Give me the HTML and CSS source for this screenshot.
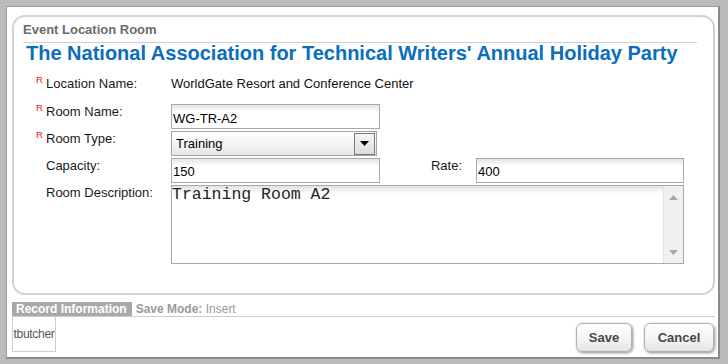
FILE: index.html
```html
<!DOCTYPE html>
<html>
<head>
<meta charset="utf-8">
<link rel="stylesheet" href="styles.css">
</head>
<body>
<div class="frame">
  <div class="window">
    <div class="panel">
      <div class="panel-title">Event Location Room</div>
      <h1 class="event-name">The National Association for Technical Writers' Annual Holiday Party</h1>
      <div class="form">
        <div class="row row-static">
          <span class="req">R</span><span class="label">Location Name:</span><span class="value">WorldGate Resort and Conference Center</span>
        </div>
        <div class="row">
          <span class="req">R</span><span class="label">Room Name:</span><div class="input w-short text-low">WG-TR-A2</div>
        </div>
        <div class="row">
          <span class="req">R</span><span class="label">Room Type:</span>
          <div class="select"><span class="select-text">Training</span><span class="select-btn"><svg width="9" height="5" viewBox="0 0 9 5"><path d="M0 0H9L4.5 5Z" fill="#000"/></svg></span></div>
        </div>
        <div class="row row-cap">
          <span class="req"></span><span class="label">Capacity:</span><div class="input w-short">150</div>
          <span class="label rate-label">Rate:</span><div class="input w-rate">400</div>
        </div>
        <div class="row">
          <span class="req"></span><span class="label">Room Description:</span>
          <div class="textarea"><div class="ta-text">Training Room A2</div><div class="scrollbar"><svg width="9" height="5" viewBox="0 0 9 5"><path d="M0 5H9L4.5 0Z" fill="#a8a8a8"/></svg><svg width="9" height="5" viewBox="0 0 9 5"><path d="M0 0H9L4.5 5Z" fill="#a8a8a8"/></svg></div></div>
        </div>
      </div>
    </div>
    <div class="record-head">
      <span class="record-tab">Record Information</span>
      <span class="save-mode"><b>Save Mode:</b> Insert</span>
    </div>
    <div class="record-foot">
      <div class="user-box">tbutcher</div>
      <div class="buttons">
        <button class="btn btn-save">Save</button>
        <button class="btn btn-cancel">Cancel</button>
      </div>
    </div>
  </div>
</div>
</body>
</html>
```
FILE: styles.css
```css
* { box-sizing: border-box; }
html, body { margin: 0; padding: 0; background: #fff; }
body { font-family: "Liberation Sans", Arial, sans-serif; font-size: 13px; color: #1a1a1a; }

.frame {
  width: 728px; height: 364px;
  background: #bcbcbc;
  padding: 6px 8px 5px 6px;
}
.window {
  height: 100%;
  background: #fff;
  border-top: 1px solid #9c9c9c;
  border-left: 1px solid #9c9c9c;
  border-right: 2px solid #8a8a8a;
  border-bottom: 2px solid #8a8a8a;
  display: flex; flex-direction: column;
}
.panel {
  margin: 8px 3px 0 5px;
  height: 280px;
  border: 2px solid #d2d2d2;
  border-radius: 13px;
  padding: 5px 16px 0 9px;
}
.panel-title {
  font-weight: bold; font-size: 13px; line-height: 16px;
  color: #6b6b6b;
  padding-bottom: 4px;
  border-bottom: 1px solid #cfcfcf;
}
.event-name {
  margin: 0 0 0 3px;
  font-size: 20px; line-height: 20px; font-weight: bold;
  color: #0a6ebd;
  white-space: nowrap;
}
.form { margin-top: 13px; padding-left: 13px; }
.row { display: flex; align-items: flex-start; margin-bottom: 2px; }
.row-static { margin-bottom: 13px; }
.row-cap { margin-top: 1px; }
.req {
  width: 10px; flex: none;
  color: #e3141c; font-size: 9.5px; line-height: 10px;
  margin-top: -1px;
}
.label { width: 125px; flex: none; line-height: 15px; color: #1a1a1a; }
.value { line-height: 15px; color: #111; }
.input {
  height: 25px;
  border: 1px solid #a9a9a9;
  background: linear-gradient(#e4e4e4 0, #ffffff 7px);
  line-height: 15px;
  padding: 5px 1px 0 1px;
  color: #000;
}
.text-low { padding-top: 6px; }
.w-short { width: 209px; }
.w-rate { width: 208px; }
.rate-label { width: 82px; text-align: right; margin-right: 14px; }
.select {
  width: 206px; height: 25px;
  border: 1px solid #a3a3a3;
  background: linear-gradient(#ffffff 0, #f4f4f4 50%, #e6e6e6 100%);
  display: flex; align-items: center; justify-content: space-between;
  padding: 0 1px 0 4px;
}
.select-text { line-height: 15px; color: #000; }
.select-btn {
  width: 21px; height: 22px;
  border: 1px solid #7a7a7a;
  background: linear-gradient(#f6f6f6, #dcdcdc);
  display: flex; align-items: center; justify-content: center;
}
.textarea {
  width: 513px; height: 79px;
  border: 1px solid #a9a9a9;
  background: linear-gradient(#e2e2e2 0, #ffffff 8px);
  display: flex;
}
.ta-text {
  flex: 1;
  font-family: "Liberation Mono", "Courier New", monospace;
  font-size: 16.5px; line-height: 18px;
  padding: 0;
  color: #222;
}
.scrollbar {
  width: 20px; margin-right: 0;
  background: #f0f0f0;
  border-left: 1px solid #e4e4e4;
  display: flex; flex-direction: column; align-items: center; justify-content: space-between;
  padding: 9px 0 8px;
}
.record-head {
  margin: 7px 3px 0 5px;
  height: 15px;
  border-bottom: 1px solid #cdcdcd;
  display: flex; align-items: flex-start;
  font-size: 12px; line-height: 14px;
  white-space: nowrap;
}
.record-tab {
  background: #a9a9a9; color: #fff; font-weight: bold;
  padding: 0 5px 0 4px; height: 14px;
}
.save-mode { color: #9a9a9a; margin-left: 4px; }
.save-mode b { color: #9a9a9a; }
.record-foot {
  margin: 0 4px 0 5px;
  display: flex; justify-content: space-between; align-items: flex-end;
}
.user-box {
  width: 44px; height: 35px;
  border: 1px solid #cdcdcd; border-top: none;
  font-size: 12px; color: #555;
  display: flex; align-items: center; justify-content: center;
  overflow: hidden; white-space: nowrap;
  letter-spacing: -0.3px;
}
.buttons { display: flex; gap: 12px; }
.btn {
  font-family: "Liberation Sans", Arial, sans-serif;
  font-size: 13px; font-weight: bold; color: #474747;
  height: 29px;
  border: 1px solid #b0b0b0;
  border-radius: 6px;
  background: linear-gradient(#ffffff 0, #f3f3f3 60%, #e4e4e4 100%);
  box-shadow: 1px 1px 3px rgba(0,0,0,0.45);
  padding: 0;
}
.btn-save { width: 56px; }
.btn-cancel { width: 70px; }
```
